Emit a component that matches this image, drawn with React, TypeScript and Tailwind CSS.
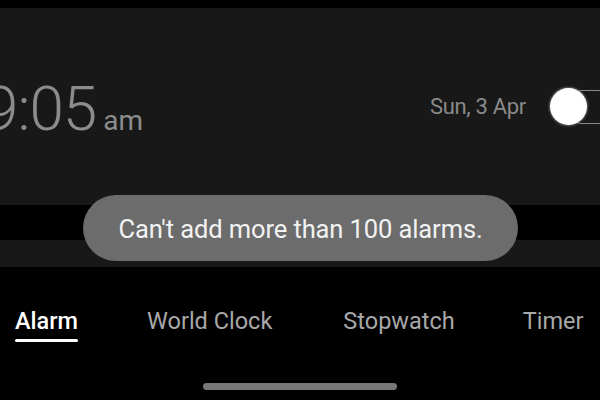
import React from 'react';

const tabs = ['Alarm', 'World Clock', 'Stopwatch', 'Timer'];

export default function App() {
    return (
        <div className="relative w-[600px] h-[400px] overflow-hidden bg-black font-['Roboto',sans-serif] flex flex-col">
            <div className="h-[8px] shrink-0" />

            {/* Alarm card */}
            <div className="h-[197px] shrink-0 bg-[#181818] flex items-center">
                <div className="flex items-baseline ml-[-16px] mt-[4px] text-[#8c8c8c]">
                    <span className="text-[62px] font-light leading-none tracking-[-1px]">9:05</span>
                    <span className="text-[28px] font-normal leading-none ml-[7px]">am</span>
                </div>
                <div className="ml-auto flex items-center">
                    <span className="text-[22px] text-[#8a8a8a] tracking-[-0.3px]">Sun, 3 Apr</span>
                    <div className="relative ml-[24px] w-[50px] h-[36px]">
                        <div className="absolute left-[15px] top-[1px] w-[60px] h-[34px] rounded-full border border-[#8a8a8a]" />
                        <div className="absolute left-0 top-[-1px] w-[37px] h-[37px] rounded-full bg-white shadow-[0_0_2px_1px_rgba(120,120,120,0.8)]" />
                    </div>
                </div>
            </div>

            <div className="h-[35px] shrink-0" />
            <div className="h-[27px] shrink-0 bg-[#181818]" />

            {/* Tabs */}
            <div className="flex items-start pt-[43px] text-[23.5px] leading-none">
                {tabs.map((t, i) => (
                    <div
                        key={t}
                        className={
                            i === 0
                                ? 'ml-[15px] flex flex-col text-white font-medium'
                                : i === 1
                                ? 'ml-[69px] text-[#a8a8a8]'
                                : i === 2
                                ? 'ml-[71px] text-[#a8a8a8]'
                                : 'ml-[68px] text-[#a8a8a8]'
                        }
                    >
                        <span>{t}</span>
                        {i === 0 && <span className="mt-[5px] h-[3px] bg-white rounded-full" />}
                    </div>
                ))}
            </div>

            {/* Home indicator */}
            <div className="absolute left-[203px] top-[383px] w-[194px] h-[7px] rounded-full bg-[#777777]" />

            {/* Toast */}
            <div className="absolute left-[83px] top-[195px] w-[435px] h-[66px] rounded-full bg-[#6c6c6c] flex items-center justify-center">
                <span className="text-[25.5px] text-[#f2f2f2] tracking-[-0.1px] mt-[2px]">Can't add more than 100 alarms.</span>
            </div>
        </div>
    );
}
